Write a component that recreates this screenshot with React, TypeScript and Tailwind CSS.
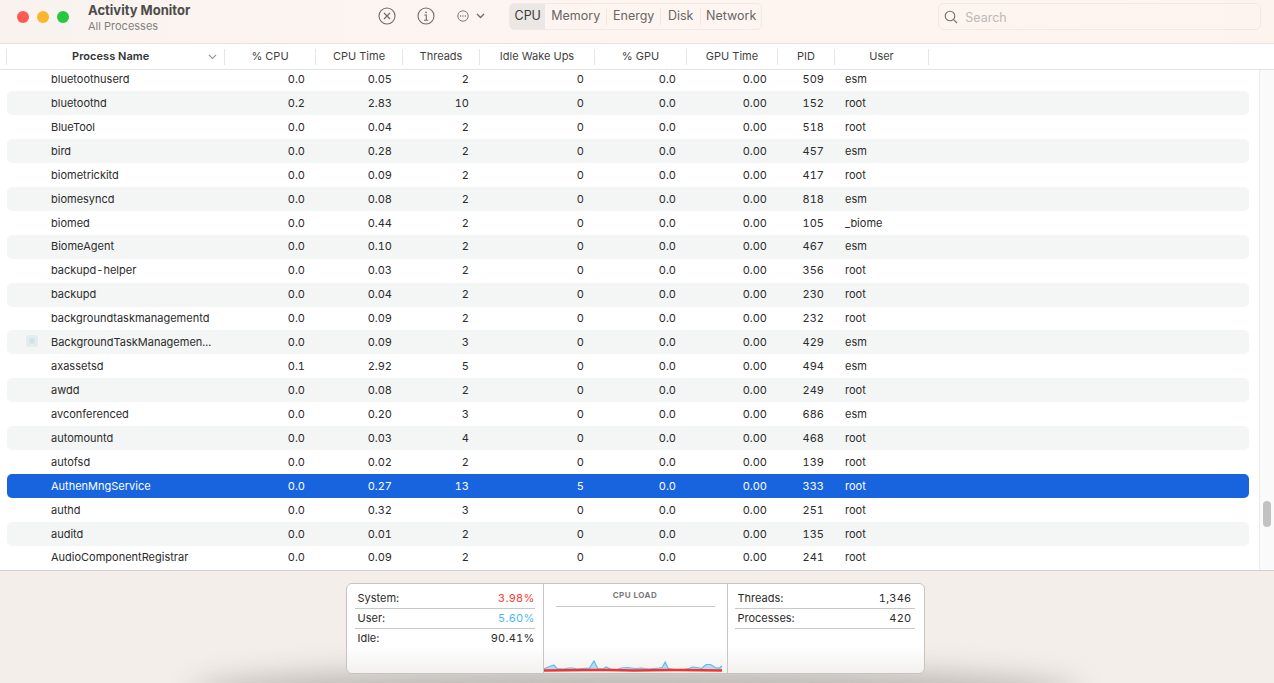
const rows: string[][] = [
  ["bluetoothuserd","0.0","0.05","2","0","0.0","0.00","509","esm"],
  ["bluetoothd","0.2","2.83","10","0","0.0","0.00","152","root"],
  ["BlueTool","0.0","0.04","2","0","0.0","0.00","518","root"],
  ["bird","0.0","0.28","2","0","0.0","0.00","457","esm"],
  ["biometrickitd","0.0","0.09","2","0","0.0","0.00","417","root"],
  ["biomesyncd","0.0","0.08","2","0","0.0","0.00","818","esm"],
  ["biomed","0.0","0.44","2","0","0.0","0.00","105","_biome"],
  ["BiomeAgent","0.0","0.10","2","0","0.0","0.00","467","esm"],
  ["backupd-helper","0.0","0.03","2","0","0.0","0.00","356","root"],
  ["backupd","0.0","0.04","2","0","0.0","0.00","230","root"],
  ["backgroundtaskmanagementd","0.0","0.09","2","0","0.0","0.00","232","root"],
  ["BackgroundTaskManagemen...","0.0","0.09","3","0","0.0","0.00","429","esm"],
  ["axassetsd","0.1","2.92","5","0","0.0","0.00","494","esm"],
  ["awdd","0.0","0.08","2","0","0.0","0.00","249","root"],
  ["avconferenced","0.0","0.20","3","0","0.0","0.00","686","esm"],
  ["automountd","0.0","0.03","4","0","0.0","0.00","468","root"],
  ["autofsd","0.0","0.02","2","0","0.0","0.00","139","root"],
  ["AuthenMngService","0.0","0.27","13","5","0.0","0.00","333","root"],
  ["authd","0.0","0.32","3","0","0.0","0.00","251","root"],
  ["auditd","0.0","0.01","2","0","0.0","0.00","135","root"],
  ["AudioComponentRegistrar","0.0","0.09","2","0","0.0","0.00","241","root"],
];

const headers = ["% CPU","CPU Time","Threads","Idle Wake Ups","% GPU","GPU Time","PID","User"];
const gridCols = "grid grid-cols-[217px_91px_87px_77px_115px_92px_91px_57px_1fr]";

function Row({ cells, index }: { cells: string[]; index: number }) {
  const selected = index === 17;
  const striped = index % 2 === 1;
  const bg = selected ? "bg-[#1764de] text-white" : striped ? "bg-[#f4f5f5] text-[#2b2b2b]" : "text-[#2b2b2b]";
  return (
    <div className={`${gridCols} h-[23.93px] items-center rounded-[5px] text-[11px] tabular-nums ${bg}`}>
      <div className="relative truncate pl-[44px]">
        {index === 11 && (
          <span className="absolute left-[19px] top-[1px] flex h-[12px] w-[12px] items-center justify-center rounded-[2px] bg-[#e3edf0] shadow-[0_0_1px_#ffffff]">
            <span className="h-[6px] w-[6px] rounded-full bg-[#d3e2e8]" />
          </span>
        )}
        {cells[0]}
      </div>
      {cells.slice(1, 8).map((c, i) => (
        <div key={i} className="pr-[10px] text-right">{c}</div>
      ))}
      <div className="pl-[11px]">{cells[8]}</div>
    </div>
  );
}

function Stat({ label, value, color, line, right }: { label: string; value: string; color?: string; line?: boolean; right?: boolean }) {
  return (
    <div className={`flex h-[20px] items-center justify-between pl-[3px] ${right ? "pr-[3px]" : "pr-0"} ${line ? "border-b border-[#c8c8c8]" : ""}`}>
      <span>{label}</span>
      <span className={`tabular-nums tracking-[0.25px] ${color ?? ""}`}>{value}</span>
    </div>
  );
}

function Chart() {
  const blue = "0,68 4,66.5 13,64 17,67.5 26,68 32,67 38,67 44,68 50,67.5 60,67 66,60 71,67.5 78,68 82,66 88,68 96,68.5 102,67 110,66.5 120,67.5 129,67 138,68 145,67.5 152,67 156,66.5 160,61 164,67.5 172,68.5 184,68.5 191,67.5 196,66 202,66.5 208,67.5 214,63.5 220,63.5 226,66.5 232,67 235,65";
  const blueScaled = blue.split(" ").map((p) => { const [x, y] = p.split(",").map(Number); return `${(x * 178) / 235},${y}`; }).join(" ");
  return (
    <svg className="absolute bottom-0 left-0" width="183" height="72" viewBox="0 0 183 72">
      <polygon points={`0,70 ${blueScaled} 178,70`} fill="#b2dcf6" />
      <polyline points={blueScaled} fill="none" stroke="#62bcee" strokeWidth="1.2" />
      <polyline points="0,69.5 45,69 65,69 90,69.5 125,69 135,69 178,69.5" fill="none" stroke="#f5332e" strokeWidth="2.6" />
    </svg>
  );
}

export default function App() {
  return (
    <div className="relative flex h-[683px] w-[1274px] flex-col overflow-hidden bg-white font-['Inter',sans-serif] text-[#2b2b2b]">
      {/* Toolbar */}
      <div className="flex h-[44px] shrink-0 items-start border-b border-[#e4e1df] bg-gradient-to-r from-[#f9f3f0] via-[#fef5f1] to-[#fdf3ef]">
        <div className="ml-[17px] mt-[11px] flex gap-[8px]">
          <span className="h-[12px] w-[12px] rounded-full bg-[#fd5a54]" />
          <span className="h-[12px] w-[12px] rounded-full bg-[#fdb52e]" />
          <span className="h-[12px] w-[12px] rounded-full bg-[#27c73f]" />
        </div>
        <div className="ml-[19px] mt-[2px]">
          <div className="text-[13px] font-bold leading-[16px] text-[#4d4b4a]">Activity Monitor</div>
          <div className="pt-[1px] text-[11px] leading-[14px] text-[#827f7e]">All Processes</div>
        </div>
        <div className="ml-[187px] mt-[7px] flex items-center text-[#6d6b6a]">
          <svg className="ml-[1px]" width="18" height="18" viewBox="0 0 18 18" fill="none" stroke="currentColor" strokeWidth="1.1">
            <circle cx="9" cy="9" r="8" />
            <path d="M6 6l6 6M12 6l-6 6" strokeWidth="1.2" />
          </svg>
          <svg className="ml-[21px]" width="18" height="18" viewBox="0 0 18 18" fill="none" stroke="currentColor" strokeWidth="1.1">
            <circle cx="9" cy="9" r="8" />
            <circle cx="9" cy="5.3" r="0.9" fill="currentColor" stroke="none" />
            <path d="M7.3 8h2v5M7 13.2h4.2" />
          </svg>
          <svg className="ml-[22px]" width="12" height="12" viewBox="0 0 12 12" fill="none" stroke="currentColor" strokeWidth="0.9">
            <circle cx="6" cy="6" r="5.2" />
            <circle cx="3.6" cy="6" r="0.7" fill="currentColor" stroke="none" />
            <circle cx="6" cy="6" r="0.7" fill="currentColor" stroke="none" />
            <circle cx="8.4" cy="6" r="0.7" fill="currentColor" stroke="none" />
          </svg>
          <svg className="ml-[7px]" width="9" height="6" viewBox="0 0 9 6" fill="none" stroke="currentColor" strokeWidth="1.3">
            <path d="M1 1l3.5 3.5L8 1" />
          </svg>
        </div>
        <div className="ml-[24px] mt-[3px] flex h-[27px] w-[253px] items-center overflow-hidden rounded-[5px] border border-[#f0e9e5] text-[12.5px] text-[#686665]">
          <div className="flex h-full w-[35px] items-center justify-center bg-[#ebe7e4] text-[#3a3938]">CPU</div>
          <div className="flex h-[17px] w-[62px] items-center justify-center border-r border-[#eee7e3]">Memory</div>
          <div className="flex h-[17px] w-[54px] items-center justify-center border-r border-[#eee7e3]">Energy</div>
          <div className="flex h-[17px] w-[40px] items-center justify-center border-r border-[#eee7e3]">Disk</div>
          <div className="flex h-[17px] flex-1 items-center justify-center">Network</div>
        </div>
        <div className="ml-[176px] mt-[3px] flex h-[27px] w-[323px] items-center rounded-[6px] border border-[#f1e8e4] pl-[5px] pt-[3px] text-[12.5px] text-[#bdb8b6]">
          <svg className="mt-[-2px]" width="14" height="14" viewBox="0 0 14 14" fill="none" stroke="#6f6d6c" strokeWidth="1.1">
            <circle cx="6" cy="6" r="4.8" />
            <path d="M9.6 9.6L13 13" />
          </svg>
          <span className="ml-[7px]">Search</span>
        </div>
      </div>

      {/* Column header */}
      <div className="flex h-[26px] shrink-0 items-center border-b border-[#e3e3e3] bg-white pl-[6px] text-[11px] text-[#3f3f3f]">
        <div className="flex h-[16px] w-[219px] items-center border-x border-[#e6e6e6]">
          <span className="ml-[65px] font-semibold tracking-[0.05px] text-[#333333]">Process Name</span>
          <svg className="ml-[auto] mr-[7px]" width="9" height="6" viewBox="0 0 9 6" fill="none" stroke="#9a9a9a" strokeWidth="1.1">
            <path d="M1 1l3.5 3.5L8 1" />
          </svg>
        </div>
        {headers.map((h, i) => {
          const w = ["w-[91px]","w-[87px]","w-[77px]","w-[115px]","w-[92px]","w-[91px]","w-[57px]","w-[94px]"][i];
          return (
            <div key={h} className={`flex h-[16px] items-center justify-center border-r border-[#e6e6e6] ${w}`}>{h}</div>
          );
        })}
      </div>

      {/* Table */}
      <div className="flex min-h-0 flex-1 border-b border-[#d2d0ce]">
        <div className="min-w-0 flex-1 overflow-hidden">
          <div className="-mt-[2.7px] w-[1249px] pl-[7px]">
            {rows.map((r, i) => <Row key={r[0]} cells={r} index={i} />)}
          </div>
        </div>
        <div className="relative w-[15px] shrink-0 border-l border-[#eaeaea] bg-[#fafafa]">
          <div className="absolute left-[3px] top-[431px] h-[26px] w-[8px] rounded-full bg-[#c2c2c2]" />
        </div>
      </div>

      {/* Bottom panel */}
      <div className="relative flex h-[112px] shrink-0 justify-center bg-[#f3eeea] pt-[12px]">
        <div className="absolute bottom-[-34px] left-[190px] h-[50px] w-[890px] rounded-[50%] bg-[#bdb8b3] blur-[14px]" />
        <div className="relative ml-[-4px] flex h-[91px] w-[579px] overflow-hidden rounded-[6px] border border-[#c6c4c2] bg-gradient-to-b from-white from-70% to-[#f2f1f0] text-[11px] text-[#2b2b2b]">
          <div className="w-[197px] border-r border-[#c6c6c6] px-[8px] pt-[4.6px]">
            <div className="w-[180px]">
              <Stat label="System:" value="3.98%" color="text-[#fb3b33]" line />
              <Stat label="User:" value="5.60%" color="text-[#4fb6f0]" line />
              <Stat label="Idle:" value="90.41%" />
            </div>
          </div>
          <div className="relative w-[184px] border-r border-[#c6c6c6]">
            <div className="mx-[12px] mt-[6px] h-[17px] border-b border-[#c8c8c8] text-center text-[8px] font-bold leading-[11px] tracking-[0.5px] text-[#7a7a7a]">CPU LOAD</div>
            <Chart />
          </div>
          <div className="flex-1 pl-[8px] pt-[4.6px]">
            <div className="w-[180px] -translate-x-[1px]">
              <Stat label="Threads:" value="1,346" line right />
              <Stat label="Processes:" value="420" line right />
            </div>
          </div>
        </div>
      </div>
    </div>
  );
}
